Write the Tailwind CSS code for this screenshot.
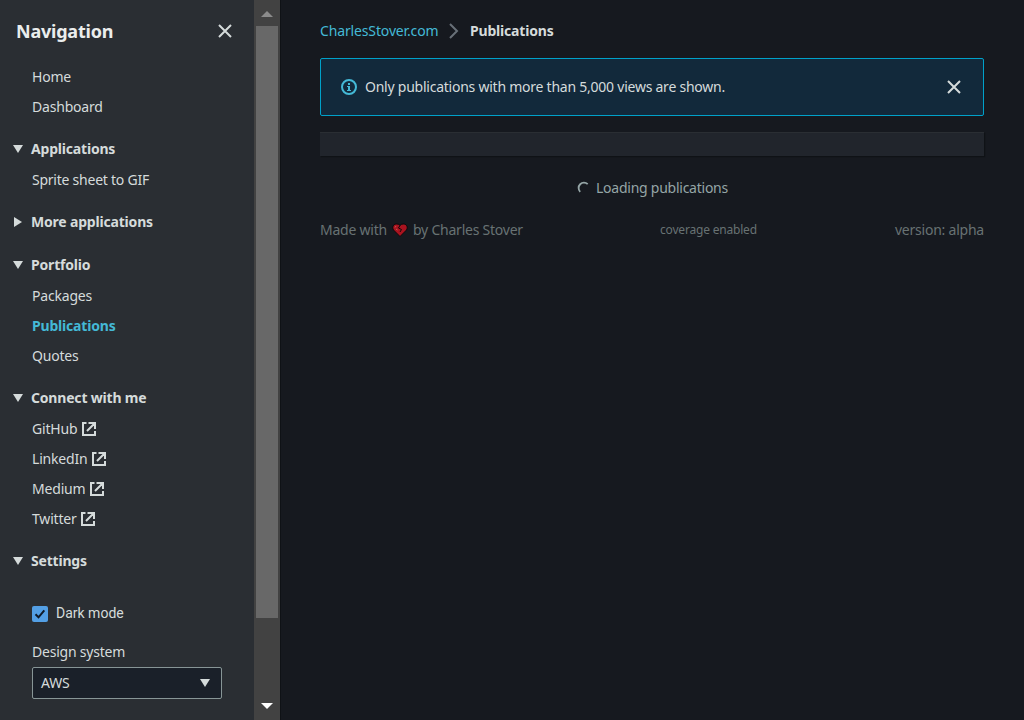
<!DOCTYPE html>
<html lang="en">
<head>
<meta charset="utf-8">
<title>Publications</title>
<script src="https://cdn.jsdelivr.net/npm/@tailwindcss/browser@4"></script>
</head>
<body class="flex h-[720px] w-[1024px] overflow-hidden bg-[#16191f] text-sm leading-5 tracking-[-0.19px] text-[#d5dbdb] [font-family:'Noto_Sans',sans-serif]">
<svg class="hidden">
  <symbol id="close" viewBox="0 0 16 16"><path d="M2 2l12 12M14 2L2 14" fill="none" stroke="currentColor" stroke-width="2"/></symbol>
  <symbol id="down" viewBox="0 0 10 8"><path d="M0 0h10L5 8z" fill="currentColor"/></symbol>
  <symbol id="right" viewBox="0 0 8 10"><path d="M0 0v10l8-5z" fill="currentColor"/></symbol>
  <symbol id="external" viewBox="0 0 14 14"><path d="M4.500 1H1v12h12V9M6.500 1H13v6M13 1L5 9" fill="none" stroke="currentColor" stroke-width="2"/></symbol>
</svg>
<aside class="flex h-full w-[254px] shrink-0 flex-col bg-[#2a2e33]">
  <header class="flex h-[62px] items-center justify-between pr-[21px] pl-4">
    <h2 class="text-lg leading-[22px] font-bold tracking-[-0.22px] text-[#eaeded]">Navigation</h2>
    <svg class="size-4"><use href="#close"/></svg>
  </header>
  <nav>
    <ul class="pl-8 leading-[30px]"><li>Home</li><li>Dashboard</li></ul>
    <h3 class="mt-3 flex h-[30px] items-center gap-2 pl-[13px] font-bold"><svg class="h-2 w-2.5"><use href="#down"/></svg>Applications</h3>
    <ul class="mt-px pl-8 leading-[30px]"><li class="tracking-[-0.24px]">Sprite sheet to GIF</li></ul>
    <h3 class="mt-3 flex h-[30px] items-center gap-[9px] pl-3.5 font-bold"><svg class="h-2.5 w-2"><use href="#right"/></svg>More applications</h3>
    <h3 class="mt-[13px] flex h-[30px] items-center gap-2 pl-[13px] font-bold"><svg class="h-2 w-2.5"><use href="#down"/></svg>Portfolio</h3>
    <ul class="mt-px pl-8 leading-[30px]"><li>Packages</li><li class="font-bold text-[#44b9d6]">Publications</li><li>Quotes</li></ul>
    <h3 class="mt-3 flex h-[30px] items-center gap-2 pl-[13px] font-bold"><svg class="h-2 w-2.5"><use href="#down"/></svg>Connect with me</h3>
    <ul class="mt-px pl-8 leading-[30px]">
      <li class="flex items-center"><span class="w-[50px]">GitHub</span><svg class="size-3.5"><use href="#external"/></svg></li>
      <li class="flex items-center"><span class="w-[60px]">LinkedIn</span><svg class="size-3.5"><use href="#external"/></svg></li>
      <li class="flex items-center"><span class="w-[58px]">Medium</span><svg class="size-3.5"><use href="#external"/></svg></li>
      <li class="flex items-center"><span class="w-[49px]">Twitter</span><svg class="size-3.5"><use href="#external"/></svg></li>
    </ul>
    <h3 class="mt-3 flex h-[30px] items-center gap-2 pl-[13px] font-bold"><svg class="h-2 w-2.5"><use href="#down"/></svg>Settings</h3>
  </nav>
  <div class="mt-[27px] pr-8 pl-8">
    <div class="flex h-5 items-start gap-2 tracking-normal [font-family:Roboto,sans-serif]">
      <span class="mt-[3px] size-4 rounded-[2px] bg-[#539fe5]"><svg class="size-4" viewBox="0 0 16 16"><path d="M3.5 8.300l3 3 5.800-7" fill="none" stroke="#0f1b2a" stroke-width="2"/></svg></span>Dark mode
    </div>
    <div class="mt-[19px] tracking-[-0.22px]">Design system</div>
    <div class="mt-[5px] flex h-8 w-[190px] items-center justify-between rounded-[2px] border border-[#879596] bg-[#1a2029] pr-[11px] pl-2">AWS<svg class="h-2 w-2.5"><use href="#down"/></svg></div>
  </div>
</aside>
<div class="flex h-full w-[26px] shrink-0 flex-col items-center bg-[#424242]">
  <div class="flex h-[26px] items-center pt-0.5"><svg class="h-1.5 w-3" viewBox="0 0 12 6"><path d="M0 6L6 0l6 6z" fill="#8b8b8b"/></svg></div>
  <div class="h-[592px] w-[22px] bg-[#686868]"></div>
  <div class="mt-auto h-[17px]"><svg class="h-1.5 w-3" viewBox="0 0 12 6"><path d="M0 0h12L6 6z" fill="#fff"/></svg></div>
</div>
<main class="flex-1 border-l border-[#0f1216] pt-[21px] pr-10 pl-[39px]">
  <div class="flex h-5 items-center">
    <span class="w-[118px] tracking-[-0.14px] text-[#44b9d6]">CharlesStover.com</span>
    <svg class="mx-2 size-4 text-[#687078]" viewBox="0 0 16 16"><path d="M4 1l7 7-7 7" fill="none" stroke="currentColor" stroke-width="2"/></svg>
    <span class="font-bold">Publications</span>
  </div>
  <div class="mt-[17px] flex h-[58px] items-center rounded-[2px] border border-[#00a1c9] bg-[#12293b] pr-[21px] pl-5">
    <svg class="mr-2 size-4 text-[#44b9d6]" viewBox="0 0 16 16"><circle cx="8" cy="8" r="7" fill="none" stroke="currentColor" stroke-width="2"/><path d="M7 4h2v2H7zM6 7h3v4h1v1H6v-1h1V8H6z" fill="currentColor"/></svg>
    <span class="tracking-[-0.24px]">Only publications with more than 5,000 views are shown.</span>
    <svg class="ml-auto size-4"><use href="#close"/></svg>
  </div>
  <div class="mt-4 h-6 border-t border-[#2a2e33] bg-[#21252c] shadow-[1px_1px_1px_#0f1216]"></div>
  <div class="mt-[22px] flex h-5 items-center justify-center tracking-[-0.25px] text-[#95a5a6]">
    <svg class="mr-1 size-4" viewBox="0 0 16 16"><path d="M4.200 11.800A5.200 5.200 0 0 1 11.700 4.200" fill="none" stroke="currentColor" stroke-width="1.800"/></svg>Loading publications
  </div>
  <footer class="mt-[22px] flex h-5 items-center text-[#687273]">
    <div class="flex w-[340px] items-center tracking-[-0.23px]"><span class="w-[72px]">Made with</span><svg class="mr-[5px] size-4" viewBox="0 0 16 16"><path d="M8 14.500L1.500 8C-.5 5 2 1.500 5 2q2 0 3 1.500Q9 2 11 2c3-.5 5.500 3 3.500 6z" fill="#a9131f" stroke="#0a0a0c"/><path d="M8 3.500L6.500 6l3 1.500L8 10" fill="none" stroke="#16090b"/><path d="M3 5.500l1-1.500M4 7l1.500 1" fill="none" stroke="#c8554f"/></svg>by Charles Stover</div>
    <div class="text-xs">coverage enabled</div>
    <div class="ml-auto tracking-[-0.22px]">version: alpha</div>
  </footer>
</main>
</body>
</html>
